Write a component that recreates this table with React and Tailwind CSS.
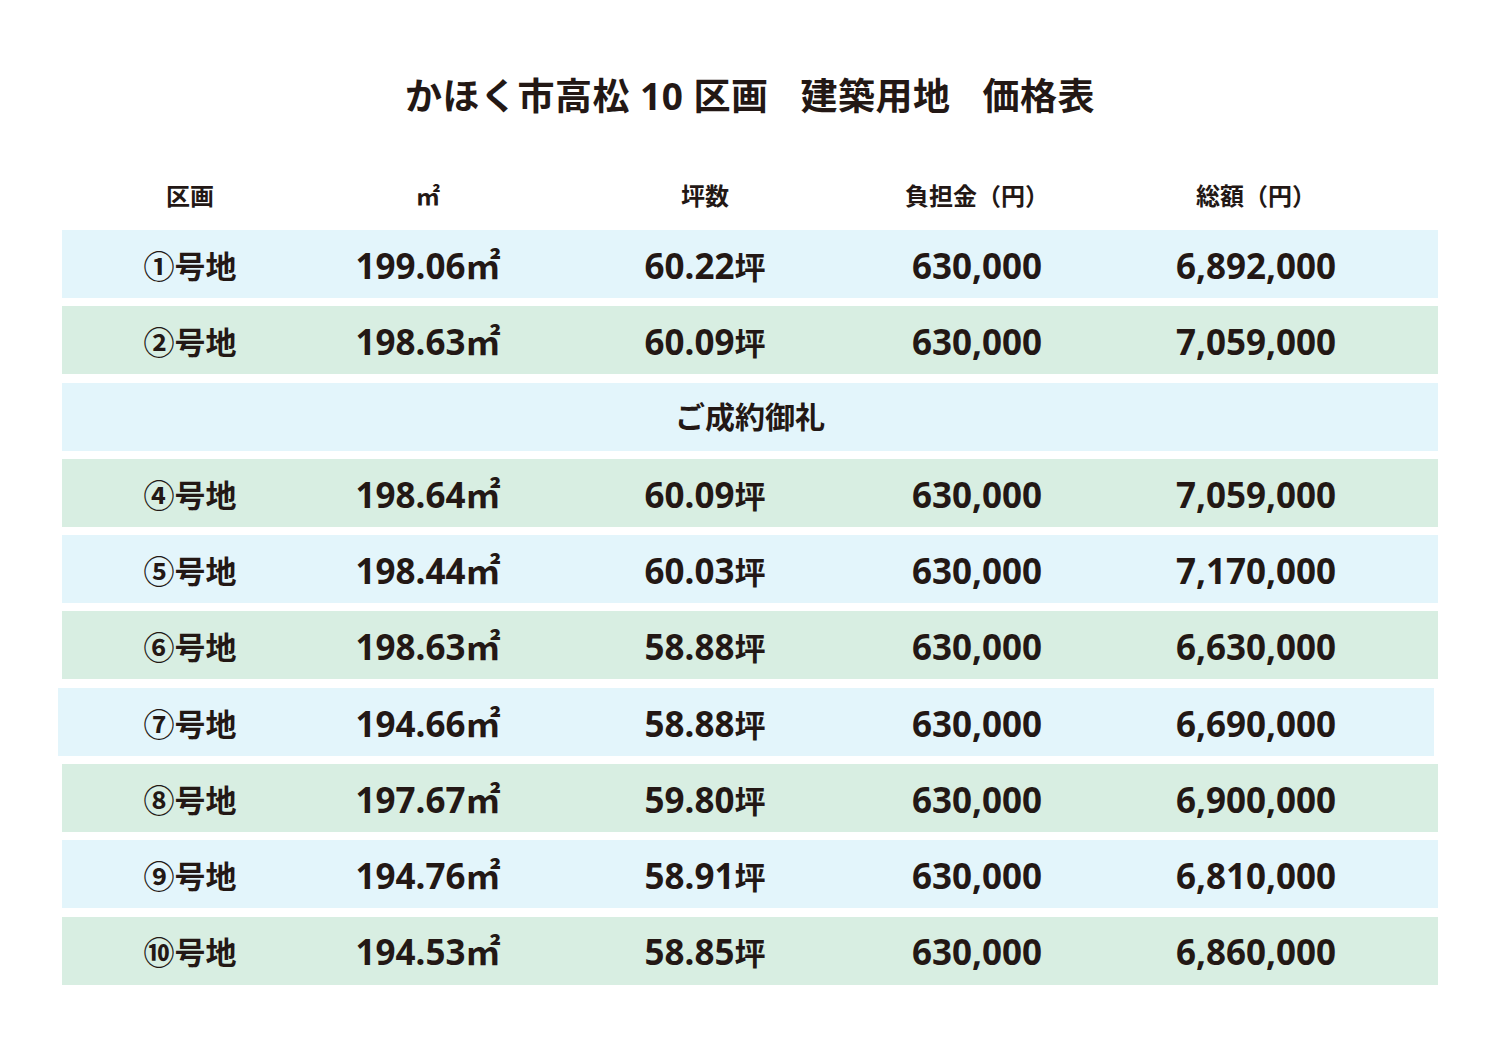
import React from 'react';

const rows = [
  { lot: '①', area: '199.06', tsubo: '60.22', fee: '630,000', total: '6,892,000', tone: 'blue' },
  { lot: '②', area: '198.63', tsubo: '60.09', fee: '630,000', total: '7,059,000', tone: 'green' },
  { sold: true, tone: 'blue' },
  { lot: '④', area: '198.64', tsubo: '60.09', fee: '630,000', total: '7,059,000', tone: 'green' },
  { lot: '⑤', area: '198.44', tsubo: '60.03', fee: '630,000', total: '7,170,000', tone: 'blue' },
  { lot: '⑥', area: '198.63', tsubo: '58.88', fee: '630,000', total: '6,630,000', tone: 'green' },
  { lot: '⑦', area: '194.66', tsubo: '58.88', fee: '630,000', total: '6,690,000', tone: 'blue', shift: true },
  { lot: '⑧', area: '197.67', tsubo: '59.80', fee: '630,000', total: '6,900,000', tone: 'green' },
  { lot: '⑨', area: '194.76', tsubo: '58.91', fee: '630,000', total: '6,810,000', tone: 'blue' },
  { lot: '⑩', area: '194.53', tsubo: '58.85', fee: '630,000', total: '6,860,000', tone: 'green' },
];

const cols = 'grid grid-cols-[256px_220px_334px_210px_348px] items-center';

export default function App() {
  return (
    <div
      className="min-h-screen w-[1500px] bg-white text-[#231815]"
      style={{ fontFamily: '"Noto Sans", "Noto Sans CJK JP", sans-serif' }}
    >
      <h1 className="pt-[72px] text-center text-[37px] font-bold leading-[48px] tracking-[0.5px]">
        かほく市高松 10 区画<span className="ml-[32px]">建築用地</span>
        <span className="ml-[32px]">価格表</span>
      </h1>

      <div className="mx-[62px] mt-[54px]">
        <div className={`${cols} h-[44px] text-[24px] font-bold`}>
          <div className="text-center">区画</div>
          <div className="text-center">㎡</div>
          <div className="text-center">坪数</div>
          <div className="text-center">負担金（円）</div>
          <div className="text-center">総額（円）</div>
        </div>

        <div className="mt-[12px] flex flex-col gap-[8.3px]">
          {rows.map((r, i) => (
            <div
              key={i}
              className={`${r.tone === 'blue' ? 'bg-[#e3f5fb]' : 'bg-[#d8eee2]'} ${r.shift ? '-ml-[4px] mr-[4px] pl-[4px]' : ''} h-[68px]`}
            >
              {r.sold ? (
                <div className="flex h-full items-center justify-center text-[30px] font-bold">ご成約御礼</div>
              ) : (
                <div className={`${cols} h-full pt-[4px] font-bold`}>
                  <div className="text-center text-[31px]">{r.lot}号地</div>
                  <div className="text-center text-[35px]">
                    {r.area}
                    <span>㎡</span>
                  </div>
                  <div className="text-center text-[35px]">
                    {r.tsubo}
                    <span className="text-[31px]">坪</span>
                  </div>
                  <div className="text-center text-[35px]">{r.fee}</div>
                  <div className="text-center text-[35px]">{r.total}</div>
                </div>
              )}
            </div>
          ))}
        </div>
      </div>
    </div>
  );
}
